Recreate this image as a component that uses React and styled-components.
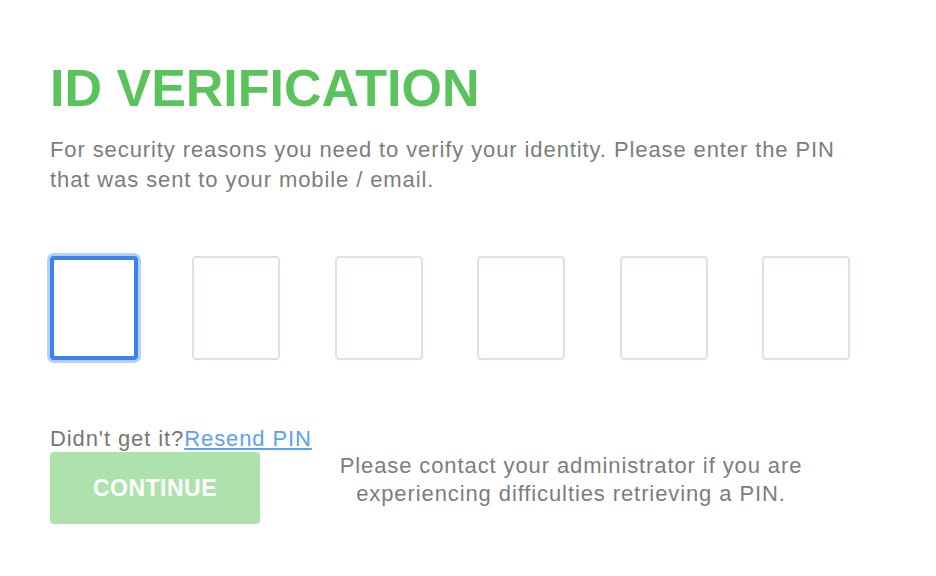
import React, { useState } from "react";
import styled, { createGlobalStyle } from "styled-components";

const GlobalStyle = createGlobalStyle`
  body {
    margin: 0;
    background: #fff;
    font-family: "Liberation Sans", Arial, sans-serif;
  }
`;

const Page = styled.div`
  width: 800px;
  padding: 57px 0 0 50px;
`;

const Title = styled.h1`
  margin: 0;
  font-size: 52px;
  line-height: 62px;
  font-weight: bold;
  color: #5bc35c;
`;

const Intro = styled.p`
  margin: 16px 0 0;
  font-size: 22px;
  line-height: 30px;
  letter-spacing: 0.9px;
  color: #7d7d7d;
`;

const PinRow = styled.div`
  display: flex;
  justify-content: space-between;
  margin-top: 61px;
`;

const PinBox = styled.input`
  box-sizing: border-box;
  width: 88px;
  height: 104px;
  border: 2px solid #dde1ee;
  border-radius: 4px;
  background: #fff;
  outline: none;
  font-size: 40px;
  text-align: center;
  color: #444;
  ${(p) =>
    p.$active &&
    `
    border: 4px solid #3b82f0;
    box-shadow: 0 0 0 3px #b6d0f8;
  `}
`;

const Resend = styled.div`
  margin-top: 66px;
  font-size: 22px;
  line-height: 26px;
  letter-spacing: 0.9px;
  color: #777;
`;

const Link = styled.a`
  color: #5aa1f4;
  text-decoration: underline;
  cursor: pointer;
`;

const Footer = styled.div`
  display: flex;
  align-items: flex-start;
`;

const Button = styled.button`
  width: 210px;
  height: 72px;
  border: none;
  border-radius: 4px;
  background: #ade2ad;
  color: #fff;
  font-family: "Liberation Sans", Arial, sans-serif;
  font-weight: bold;
  font-size: 23px;
  letter-spacing: 0.5px;
  cursor: pointer;
`;

const Help = styled.p`
  margin: 0 0 0 76px;
  width: 470px;
  text-align: center;
  font-size: 22px;
  line-height: 28px;
  letter-spacing: 0.9px;
  color: #7d7d7d;
`;

export default function App() {
  const [pin, setPin] = useState(["", "", "", "", "", ""]);

  const handleChange = (i) => (e) => {
    const next = [...pin];
    next[i] = e.target.value.slice(-1);
    setPin(next);
  };

  return (
    <>
      <GlobalStyle />
      <Page>
        <Title>ID VERIFICATION</Title>
        <Intro>
          For security reasons you need to verify your identity. Please enter the PIN
          that was sent to your mobile / email.
        </Intro>
        <PinRow>
          {pin.map((v, i) => (
            <PinBox key={i} $active={i === 0} value={v} onChange={handleChange(i)} />
          ))}
        </PinRow>
        <Resend>
          Didn't get it?<Link>Resend PIN</Link>
        </Resend>
        <Footer>
          <Button>CONTINUE</Button>
          <Help>
            Please contact your administrator if you are experiencing difficulties
            retrieving a PIN.
          </Help>
        </Footer>
      </Page>
    </>
  );
}
